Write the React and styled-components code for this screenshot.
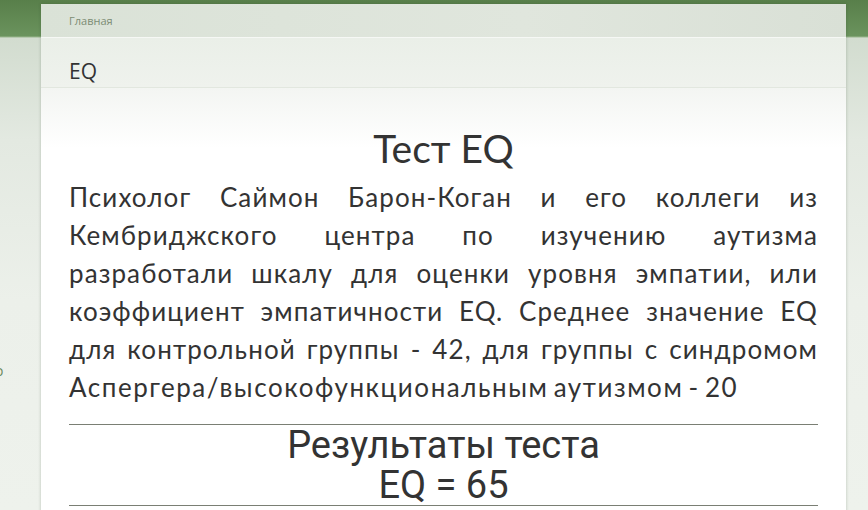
import React from "react";
import styled, { createGlobalStyle } from "styled-components";

const Global = createGlobalStyle`
  html, body { margin: 0; padding: 0; }
  body {
    width: 868px;
    height: 510px;
    overflow: hidden;
    font-family: "Open Sans", "Liberation Sans", sans-serif;
    background: #eef2ec;
  }
`;

const Page = styled.div`
  display: flex;
  align-items: flex-start;
  height: 510px;
  padding-top: 4px;
  box-sizing: border-box;
  overflow: hidden;
  background: linear-gradient(
    to bottom,
    #587f4a 0px,
    #6a935d 36px,
    #9ab68e 37px,
    #d2dccf 38px,
    #e3e9e1 140px,
    #ecf0ea 300px,
    #eef2ec 510px
  );
`;

const Gutter = styled.div`
  width: ${(p) => p.$w}px;
  flex: ${(p) => (p.$grow ? "1 1 auto" : "0 0 auto")};
  display: flex;
  flex-direction: column;
  align-self: stretch;
`;

const SideText = styled.span`
  margin-top: 357px;
  margin-left: -5px;
  font-family: "Open Sans", sans-serif;
  font-size: 14px;
  color: #6c8a5f;
`;

const Card = styled.div`
  width: 805px;
  flex: 0 0 auto;
  display: flex;
  flex-direction: column;
  box-shadow: 0 0 3px rgba(40, 60, 30, 0.25);
  background: #ffffff;
  height: 520px;
`;

const Crumbs = styled.div`
  height: 34px;
  display: flex;
  align-items: center;
  padding-left: 28px;
  background: linear-gradient(to right, #dae2d7, #e0e6dd 60%, #d9e0d6);
  border-bottom: 1px solid #f6f8f5;
  font-family: "Open Sans", "Liberation Sans", sans-serif;
  font-size: 11px;
  color: #7c8c74;
  box-sizing: border-box;
`;

const PageHead = styled.div`
  height: 50px;
  display: flex;
  align-items: flex-start;
  padding: 20px 0 0 28px;
  background: linear-gradient(to bottom, #eaefe8, #eff2ed);
  border-bottom: 1px solid #e2e7df;
  font-family: "Open Sans", "Liberation Sans", sans-serif;
  font-size: 21px;
  line-height: 26px;
  color: #333;
  box-sizing: border-box;
`;

const Content = styled.div`
  flex: 1;
  padding: 37px 28px 0;
  background: linear-gradient(to bottom, #f3f5f2 0px, #ffffff 60px);
  color: #333;
`;

const Title = styled.h1`
  margin: 0;
  text-align: center;
  font-family: "Lato", "Open Sans", sans-serif;
  font-weight: 400;
  font-size: 39px;
  line-height: 46px;
  color: #333;
`;

const Para = styled.p`
  margin: 7px 0 18px;
  font-family: "Lato", "Open Sans", sans-serif;
  font-size: 26px;
  line-height: 38px;
  letter-spacing: 1.1px;
  word-spacing: -3px;
  color: #333;
`;

const Line = styled.span`
  display: block;
  text-align: ${(p) => (p.$last ? "left" : "justify")};
  text-align-last: ${(p) => (p.$last ? "left" : "justify")};
  letter-spacing: ${(p) => (p.$last ? "1.55px" : "inherit")};
  white-space: nowrap;
`;

const Rule = styled.hr`
  margin: 0;
  border: 0;
  border-top: 1px solid #7a7f74;
  height: 0;
`;

const Result = styled.div`
  text-align: center;
  font-family: "Roboto", "Open Sans", sans-serif;
  font-size: 38px;
  line-height: ${(p) => p.$lh}px;
  color: #333;
`;

const lines = [
  "Психолог Саймон Барон-Коган и его коллеги из",
  "Кембриджского центра по изучению аутизма",
  "разработали шкалу для оценки уровня эмпатии, или",
  "коэффициент эмпатичности EQ. Среднее значение EQ",
  "для контрольной группы - 42, для группы с синдромом",
];

export default function App() {
  return (
    <>
      <Global />
      <Page>
        <Gutter $w={41}>
          <SideText>о</SideText>
        </Gutter>
        <Card>
          <Crumbs>Главная</Crumbs>
          <PageHead>EQ</PageHead>
          <Content>
            <Title>Тест EQ</Title>
            <Para>
              {lines.map((l) => (
                <Line key={l}>{l}</Line>
              ))}
              <Line $last>Аспергера/высокофункциональным аутизмом - 20</Line>
            </Para>
            <Rule />
            <Result $lh={41}>Результаты теста</Result>
            <Result $lh={39}>EQ = 65</Result>
            <Rule />
          </Content>
        </Card>
        <Gutter $grow />
      </Page>
    </>
  );
}
